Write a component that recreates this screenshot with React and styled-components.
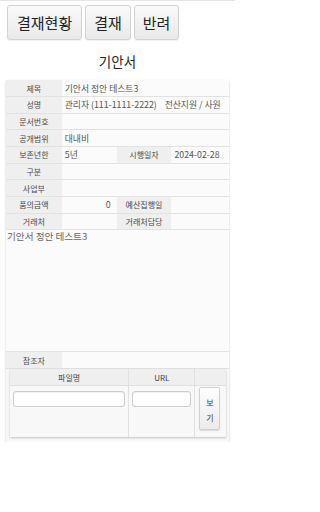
import React from "react";
import styled, { createGlobalStyle } from "styled-components";

const Global = createGlobalStyle`
  html, body { margin: 0; padding: 0; background: #fff; }
  body { font-family: "Noto Sans CJK KR", "Noto Sans", sans-serif; color: #333; }
`;

const Page = styled.div`
  width: 235px;
  border-top: 1px solid #e6e6e6;
  padding: 4px 6px 0 6px;
  box-sizing: border-box;
`;

const Toolbar = styled.div`
  display: flex;
  gap: 3px;
  padding-left: 1px;
`;

const Btn = styled.button`
  font-family: inherit;
  font-size: 15px;
  line-height: 20px;
  height: 35px;
  padding: 0 ${p => p.$pad || 9}px;
  color: #222;
  background: linear-gradient(#fafafa, #e9e9e9);
  border: 1px solid #d2d2d2;
  border-radius: 3px;
  box-shadow: 0 1px 1px rgba(0,0,0,0.06);
`;

const Title = styled.div`
  text-align: center;
  font-size: 13.5px;
  line-height: 20px;
  margin-top: 11px;
  margin-bottom: 9px;
  color: #222;
`;

const Panel = styled.div`
  background: #f8f8f8;
  box-shadow: 0 1px 2px rgba(0,0,0,0.22);
  padding-bottom: 5px;
`;

const Table = styled.table`
  width: 100%;
  border-collapse: collapse;
  table-layout: fixed;
  font-size: 8px;
`;

const Row = styled.tr`
  height: ${p => p.$h || 16.67}px;
`;

const Label = styled.th`
  background: #efefef;
  font-weight: normal;
  color: #4a4a4a;
  border-bottom: 1px solid #e2e2e2;
  text-align: center;
  padding: 0;
  white-space: nowrap;
`;

const Value = styled.td`
  background: #fbfbfb;
  color: #555;
  font-size: 8.8px;
  border-bottom: 1px solid #e2e2e2;
  padding: 0 3px;
  text-align: ${p => p.$right ? "right" : "left"};
  padding-right: ${p => p.$right ? "6px" : "3px"};
  white-space: nowrap;
  overflow: hidden;
`;

const Content = styled.td`
  background: #fbfbfb;
  color: #666;
  font-size: 9.6px;
  vertical-align: top;
  padding: 0 1px;
  border-bottom: 1px solid #e2e2e2;
  line-height: 13px;
`;

const FileWrap = styled.div`
  padding: 0 3px 0 4px;
`;

const FileTable = styled.table`
  width: 100%;
  border-collapse: collapse;
  table-layout: fixed;
  font-size: 8px;
  background: #f8f8f8;
  box-shadow: 0 1px 2px rgba(0,0,0,0.22);
`;

const FileHead = styled.th`
  background: #efefef;
  font-weight: normal;
  color: #444;
  height: 16px;
  padding: 0;
  border-left: ${p => p.$first ? "none" : "1px solid #e0e0e0"};
  border-bottom: 1px solid #e0e0e0;
`;

const FileCell = styled.td`
  height: 46px;
  vertical-align: top;
  padding: ${p => p.$btn ? "1px 0 0 4px" : "5px 3px 0 3px"};
  border-left: ${p => p.$first ? "none" : "1px solid #e0e0e0"};
`;

const Input = styled.div`
  height: 16px;
  box-sizing: border-box;
  background: #fff;
  border: 1px solid #ccc;
  border-radius: 3px;
  box-shadow: inset 0 1px 1px rgba(0,0,0,0.06);
`;

const ViewBtn = styled.div`
  width: 21px;
  height: 43px;
  box-sizing: border-box;
  border: 1px solid #d0d0d0;
  border-radius: 2px;
  background: linear-gradient(#fdfdfd, #ececec);
  box-shadow: 0 1px 1px rgba(0,0,0,0.12);
  display: flex;
  flex-direction: column;
  align-items: center;
  justify-content: center;
  gap: 7px;
  padding-top: 3px;
  font-size: 8px;
  line-height: 8px;
  color: #2f3a66;
`;

const rows = [
  ["제목", "기안서 정안 테스트3"],
  ["성명", "관리자 (111-1111-2222)\u00a0\u00a0\u00a0\u00a0전산지원 / 사원"],
  ["문서번호", ""],
  ["공개범위", "대내비"],
];

export default function App() {
  return (
    <Page>
      <Global />
      <Toolbar>
        <Btn $pad={9}>결재현황</Btn>
        <Btn $pad={8}>결재</Btn>
        <Btn $pad={8}>반려</Btn>
      </Toolbar>
      <Title>기안서</Title>
      <Panel>
        <Table>
          <colgroup>
            <col style={{ width: "25%" }} />
            <col style={{ width: "24.6%" }} />
            <col style={{ width: "24.6%" }} />
            <col />
          </colgroup>
          <tbody>
            {rows.map(([l, v]) => (
              <Row key={l}>
                <Label>{l}</Label>
                <Value colSpan={3}>{v}</Value>
              </Row>
            ))}
            <Row>
              <Label>보존년한</Label>
              <Value>5년</Value>
              <Label>시행일자</Label>
              <Value>2024-02-28</Value>
            </Row>
            <Row>
              <Label>구분</Label>
              <Value colSpan={3}></Value>
            </Row>
            <Row>
              <Label>사업부</Label>
              <Value colSpan={3}></Value>
            </Row>
            <Row>
              <Label>품의금액</Label>
              <Value $right>0</Value>
              <Label>예산집행일</Label>
              <Value></Value>
            </Row>
            <Row>
              <Label>거래처</Label>
              <Value></Value>
              <Label>거래처담당</Label>
              <Value></Value>
            </Row>
            <Row $h={122}>
              <Content colSpan={4}>기안서 정안 테스트3</Content>
            </Row>
            <Row $h={17}>
              <Label>참조자</Label>
              <Value colSpan={3}></Value>
            </Row>
          </tbody>
        </Table>
        <FileWrap>
          <FileTable>
            <colgroup>
              <col style={{ width: "55%" }} />
              <col style={{ width: "30.6%" }} />
              <col />
            </colgroup>
            <thead>
              <tr>
                <FileHead $first>파일명</FileHead>
                <FileHead>URL</FileHead>
                <FileHead></FileHead>
              </tr>
            </thead>
            <tbody>
              <tr>
                <FileCell $first><Input /></FileCell>
                <FileCell><Input /></FileCell>
                <FileCell $btn>
                  <ViewBtn>
                    <span>보</span>
                    <span>기</span>
                  </ViewBtn>
                </FileCell>
              </tr>
            </tbody>
          </FileTable>
        </FileWrap>
      </Panel>
    </Page>
  );
}
